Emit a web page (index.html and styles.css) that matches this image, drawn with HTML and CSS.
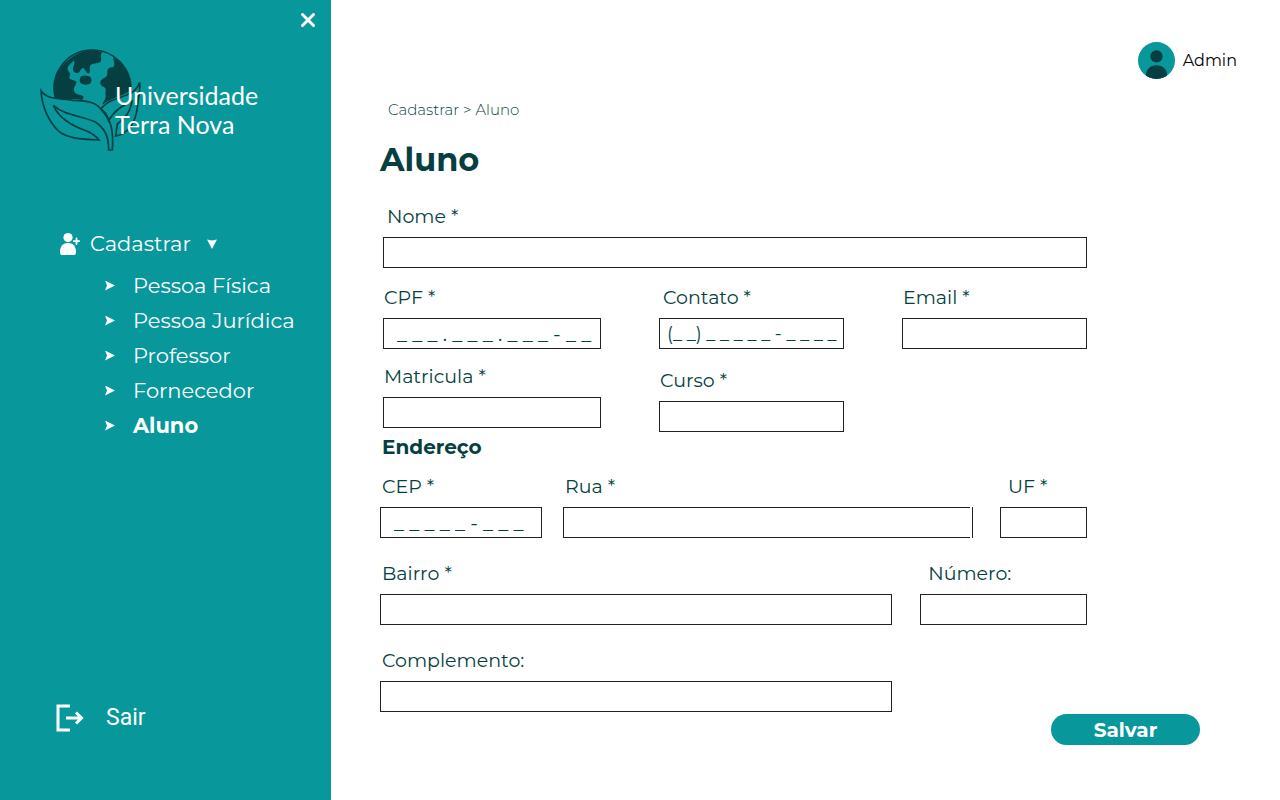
FILE: index.html
```html
<!DOCTYPE html>
<html lang="pt-BR">
<head>
<meta charset="utf-8">
<meta name="viewport" content="width=device-width, initial-scale=1">
<title>Universidade Terra Nova - Cadastrar Aluno</title>
<link rel="stylesheet" href="styles.css">
</head>
<body>
<div class="app">
  <aside class="sidebar">
    <button class="close" type="button" aria-label="Fechar menu">
      <svg viewBox="0 0 16 16" width="16" height="16"><path d="M2.500 2.500l11 11M13.500 2.500l-11 11" fill="none" stroke="#fff" stroke-width="3" stroke-linecap="round"/></svg>
    </button>
    <div class="brand">
      <svg class="brand-mark" viewBox="30 25 303 309" width="101" height="103" aria-hidden="true">
        <g fill="#063f41">
          <path d="M76 172C66 120 82 78 128 48L133 55C128 68 110 74 113 86C115 96 124 95 118 108C117 118 128 116 138 122C142 132 129 138 132 150C138 166 156 160 161 168L158 177C130 174 100 178 76 172Z"/>
          <path d="M128 48C155 28 190 25 217 34C208 44 218 52 211 64C202 70 186 66 180 76C176 84 184 90 178 97C168 102 166 82 158 82C152 82 152 96 142 97C130 98 126 86 131 76C136 66 132 58 128 48Z"/>
          <path d="M154 107C163 102 172 106 180 108C188 116 184 128 176 131C168 133 152 132 150 124C148 118 150 111 154 107Z"/>
          <path d="M249 49C284 68 303 105 302 151C275 166 240 174 218 192C220 180 228 176 227 164C225 152 231 144 222 139C210 136 208 124 214 118C222 112 232 110 232 98C231 86 236 80 247 80C258 76 251 62 249 49Z"/>
        </g>
        <g fill="none" stroke="#063f41" stroke-width="5">
          <path d="M76 172A115 115 0 1 1 301 160"/>
          <path d="M33 150C54 178 84 172 130 179C178 180 202 186 218 212C236 236 252 250 247 328L236 328C236 282 222 262 196 244C154 224 106 226 70 194C88 236 128 256 168 270C188 278 196 284 207 298C150 296 108 292 84 270C50 234 36 196 33 150Z"/>
          <path d="M329 126C316 160 290 162 250 178C228 186 220 196 213 205C226 216 232 222 236 240C254 208 276 196 306 182C298 222 284 230 262 250L257 286C300 278 318 238 323 194C324 170 332 150 329 126Z"/>
        </g>
      </svg>
      <div class="brand-name">Universidade<br>Terra Nova</div>
    </div>
    <nav class="menu" aria-label="Principal">
      <button class="menu-head" type="button" aria-expanded="true">
        <svg viewBox="0 0 20 22" width="20" height="22" fill="#fff"><circle cx="8" cy="4.600" r="4.600"/><path d="M0 19.500C0 13 3 10 8 10s8 3 8 9.500C16 21.500 15 22 13.500 22h-11C1 22 0 21.500 0 19.500Z"/><path d="M16.500 5.500v5.500M13.800 8.200h5.600" stroke="#fff" stroke-width="1.800" stroke-linecap="round"/></svg>
        <span>Cadastrar</span>
        <svg class="caret" viewBox="0 0 10 10" width="10" height="10"><path d="M0 0.500L5 1.500l5-1L5 10Z" fill="#fff"/></svg>
      </button>
      <ul class="submenu">
        <li><a href="#pessoa-fisica">Pessoa Física</a></li>
        <li><a href="#pessoa-juridica">Pessoa Jurídica</a></li>
        <li><a href="#professor">Professor</a></li>
        <li><a href="#fornecedor">Fornecedor</a></li>
        <li><a class="active" href="#aluno" aria-current="page">Aluno</a></li>
      </ul>
    </nav>
    <a class="logout" href="#sair">
      <svg viewBox="0 0 28 28" width="28" height="28" fill="none" stroke="#fff" stroke-width="3"><path d="M14 2H2v24h12"/><path d="M10 14h15M20 8.500l5.500 5.500-5.500 5.500"/></svg>
      <span>Sair</span>
    </a>
  </aside>

  <main class="content">
    <header class="topbar">
      <a class="user" href="#perfil">
        <svg viewBox="0 0 36 36" width="37" height="37"><defs><clipPath id="face"><circle cx="18" cy="18" r="18"/></clipPath></defs><circle cx="18" cy="18" r="18" fill="#08979b"/><g fill="#063f41" clip-path="url(#face)"><circle cx="18" cy="14" r="6"/><path d="M7.500 36V33C8 26 12 22.500 18 22.500S28 26 28.500 33v3Z"/></g></svg>
        <span>Admin</span>
      </a>
    </header>
    <p class="crumbs">Cadastrar &gt; Aluno</p>
    <h1>Aluno</h1>
    <form class="form">
      <div class="personal">
        <div class="field inset full"><label for="nome">Nome *</label><input id="nome" type="text" required></div>
        <div class="column">
          <div class="field"><label for="cpf">CPF *</label><input id="cpf" class="mask" type="text" placeholder="_ _ _ . _ _ _ . _ _ _ - _ _" required></div>
          <div class="field"><label for="matricula">Matricula *</label><input id="matricula" type="text" required></div>
        </div>
        <div class="column loose">
          <div class="field inset"><label for="contato">Contato *</label><input id="contato" class="mask compact" type="text" placeholder="(_ _) _ _ _ _ _ - _ _ _ _" required></div>
          <div class="field"><label for="curso">Curso *</label><input id="curso" type="text" required></div>
        </div>
        <div class="field"><label for="email">Email *</label><input id="email" type="email" required></div>
      </div>
      <h2>Endereço</h2>
      <div class="address">
        <div class="row street">
          <div class="field"><label for="cep">CEP *</label><input id="cep" class="mask" type="text" placeholder="_ _ _ _ _ - _ _ _" required></div>
          <div class="field"><label for="rua">Rua *</label><div class="split"><input id="rua" type="text" required></div></div>
          <div class="field indent"><label for="uf">UF *</label><input id="uf" type="text" maxlength="2" required></div>
        </div>
        <div class="row district">
          <div class="field"><label for="bairro">Bairro *</label><input id="bairro" type="text" required></div>
          <div class="field indent"><label for="numero">Número:</label><input id="numero" type="text"></div>
        </div>
        <div class="row district">
          <div class="field"><label for="complemento">Complemento:</label><input id="complemento" type="text"></div>
        </div>
      </div>
      <button class="save" type="submit">Salvar</button>
    </form>
  </main>
</div>
</body>
</html>
```

FILE: styles.css
```css
:root {
  --teal: #08979b;
  --ink: #063f41;
}

* { box-sizing: border-box; }

body {
  margin: 0;
  background: #fff;
  color: var(--ink);
  font-family: Montserrat, Inter, sans-serif;
  font-weight: 400;
}

button, input { font: inherit; color: inherit; }
a { color: inherit; text-decoration: none; }
svg { display: block; }

.app {
  display: grid;
  grid-template-columns: 331px minmax(0, 1fr);
  min-height: 100vh;
}

/* Sidebar */
.sidebar {
  display: flex;
  flex-direction: column;
  padding: 12px 15px 68px 40px;
  background: var(--teal);
  color: #fff;
}

.close {
  align-self: flex-end;
  padding: 0;
  border: 0;
  background: none;
  cursor: pointer;
}

.brand {
  display: flex;
  align-items: center;
  margin-top: 21px;
}

.brand-name {
  position: relative;
  margin-left: -26px;
  padding-top: 18px;
  font: 400 25px/29px Lato, sans-serif;
}

.menu { margin-top: 80px; padding-left: 20px; }

.menu-head {
  display: flex;
  align-items: center;
  gap: 10px;
  padding: 0;
  border: 0;
  background: none;
  font-size: 21px;
  line-height: 24px;
  cursor: pointer;
}

.caret { margin-left: 6px; }

.submenu {
  margin: 12px 0 0;
  padding: 0 0 0 45px;
  list-style: none;
  font-size: 21px;
  line-height: 35px;
}

.submenu a {
  display: flex;
  align-items: center;
  gap: 18px;
}

.submenu a::before {
  content: "";
  width: 10px;
  height: 10px;
  background: #fff;
  clip-path: polygon(0 0, 100% 50%, 0 100%, 20% 50%);
}

.submenu .active { font-weight: 700; }

.logout {
  display: flex;
  align-items: center;
  gap: 22px;
  margin-top: auto;
  padding-left: 16px;
  font: 400 23px/28px Roboto, sans-serif;
}

/* Content */
.content { padding: 42px 43px 48px 49px; }

.topbar { display: flex; justify-content: flex-end; }

.user {
  display: flex;
  align-items: center;
  gap: 8px;
  color: #000;
  font-size: 16px;
}

.crumbs {
  margin: 21px 0 0 8px;
  font-size: 15px;
  font-weight: 300;
  line-height: 20px;
}

h1 {
  margin: 20px 0 0;
  font-size: 32px;
  font-weight: 700;
  line-height: 40px;
}

h2 {
  margin: 3px 0 16px 2px;
  font-size: 20px;
  font-weight: 700;
  line-height: 24px;
}

.form {
  display: flex;
  flex-direction: column;
  margin-top: 25px;
  padding-right: 37px;
}

.personal {
  display: grid;
  grid-template-columns: 218fr 185fr 185fr;
  column-gap: 58px;
  row-gap: 18px;
  margin-left: 3px;
}

.personal, .address { margin-right: 113px; }

.full { grid-column: 1 / -1; }

.column { display: flex; flex-direction: column; gap: 16px; }
.loose { gap: 20px; }

.address { display: flex; flex-direction: column; gap: 24px; }

.row { display: grid; gap: 28px; align-items: end; }
.street { grid-template-columns: 162fr 416fr 87fr; column-gap: 21px; }
.district { grid-template-columns: 513fr 167fr; }

.field {
  display: flex;
  flex-direction: column;
  gap: 8px;
  min-width: 0;
}

.field label {
  padding-left: 1px;
  font-size: 19px;
  line-height: 24px;
}

.address label { padding-left: 2px; }
.inset label { padding-left: 4px; }
.indent label { padding-left: 8px; }

.field input {
  width: 100%;
  height: 31px;
  padding: 0 4px;
  border: 1px solid #222;
  border-radius: 0;
  background: #fff;
}

.split { margin-right: 6px; padding-right: 2px; border-right: 1px solid #222; }
.split input { display: block; border-right: 0; }

.field .mask { padding: 0 4px 0 13px; font-size: 20px; }
.field .compact { padding-left: 7px; font-size: 18px; }
.mask::placeholder { color: var(--ink); opacity: 1; }

.save {
  align-self: flex-end;
  width: 149px;
  height: 31px;
  margin-top: 2px;
  padding: 0;
  border: 0;
  border-radius: 16px;
  background: var(--teal);
  color: #fff;
  font-size: 20px;
  font-weight: 700;
  line-height: 28px;
  cursor: pointer;
}
```
